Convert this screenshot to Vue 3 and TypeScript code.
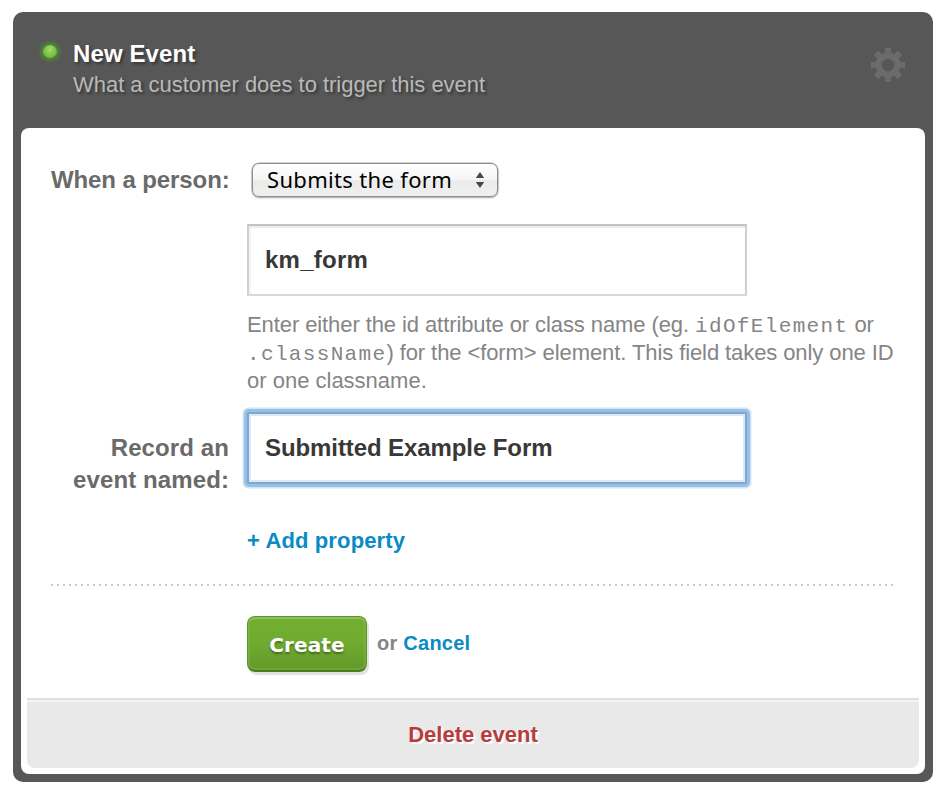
<script setup lang="ts">
import { ref } from 'vue'

const formId = ref<string>('km_form')
const eventName = ref<string>('Submitted Example Form')
const trigger = ref<string>('Submits the form')
const teeth: number[] = [0, 45, 90, 135, 180, 225, 270, 315]
</script>

<template>
  <main class="card">
    <header class="head">
      <i class="status"></i>
      <div class="titles">
        <h1>New Event</h1>
        <p><span class="subtitle">What a customer does to trigger this event</span></p>
      </div>
      <svg class="gear" width="34" height="34" viewBox="-17 -17 34 34">
        <g fill="#6b6b6b">
          <path v-for="a in teeth" :key="a" d="M-4.8 -10L-3.1 -13V-17H3.1V-13L4.8 -10Z" :transform="`rotate(${a})`" />
        </g>
        <circle r="9.3" fill="none" stroke="#6b6b6b" stroke-width="6" />
      </svg>
    </header>
    <section class="panel">
      <form class="form" @submit.prevent>
        <div class="row trigger-row">
          <label class="label first">When a person:</label>
          <button type="button" class="select">
            <span>{{ trigger }}</span>
            <svg width="10" height="16" viewBox="0 0 10 16"><path d="M5 0L9.2 6H.8ZM5 16L.8 10H9.2Z" fill="#474747" /></svg>
          </button>
        </div>
        <div class="row">
          <div class="offset">
            <input v-model="formId" class="field plain" type="text" spellcheck="false" />
            <p class="help">
              <span class="l1">Enter either the id attribute or class name (eg. <code>idOfElement</code> or</span><br />
              <span class="l2"><code>.className</code>) for the &lt;form&gt; element. This field takes only one ID</span><br />
              <span class="l3">or one classname.</span>
            </p>
          </div>
        </div>
        <div class="row name-row">
          <label class="label second">Record an<br />event named:</label>
          <input v-model="eventName" class="field focused" type="text" spellcheck="false" />
        </div>
        <div class="row"><a class="add">+ Add property</a></div>
        <svg class="divider" width="843" height="2"><path d="M0 1H843" stroke="#cacaca" stroke-width="2" stroke-dasharray="2 4" /></svg>
        <div class="actions">
          <button class="create" type="submit">Create</button>
          <span class="or">or <a>Cancel</a></span>
        </div>
      </form>
      <footer class="foot"><a>Delete event</a></footer>
    </section>
  </main>
</template>

<style>
body { background: #fff; }
</style>

<style scoped>
.card {
  box-sizing: border-box;
  width: 920px;
  height: 770px;
  margin: 12px 0 0 13px;
  padding: 0 8px 8px;
  border-radius: 10px;
  background: #575757;
  display: flex;
  flex-direction: column;
  font-family: "Liberation Sans", Arial, sans-serif;
}
.head {
  height: 116px;
  flex: none;
  display: flex;
  align-items: flex-start;
  box-sizing: border-box;
  padding: 0 20px;
}
.status {
  width: 14px;
  height: 13px;
  margin: 33px 16px 0 2px;
  border-radius: 50%;
  background: radial-gradient(ellipse at 50% 35%, #a5dc68 0, #83c64b 45%, #66a938 100%);
  box-shadow: 0 0 5px 2px #4b9b25;
}
.titles {
  flex: 1;
  padding-top: 27px;
  text-shadow: 2px 2px 3px rgba(0, 0, 0, .4);
}
h1, p { margin: 0; }
h1 {
  font-size: 24px;
  line-height: 30px;
  letter-spacing: .1px;
  color: #fff;
}
.titles p {
  font-size: 22px;
  line-height: 32px;
  color: #b9b9b9;
}
.subtitle { letter-spacing: -.03px; }
.gear { margin-top: 36px; }
.panel {
  height: 646px;
  display: flex;
  flex-direction: column;
  box-sizing: border-box;
  padding: 0 6px 6px;
  background: #fff;
  border-radius: 8px;
}
.form {
  flex: 1;
  padding: 35px 24px 0;
}
.row { display: flex; align-items: flex-start; }
.label {
  width: 178px;
  flex: none;
  margin-right: 18px;
  text-align: right;
  font-size: 24px;
  line-height: 32px;
  font-weight: bold;
  letter-spacing: .1px;
  white-space: nowrap;
  color: #6a6a6a;
}
.first { margin-top: 1px; letter-spacing: -.1px; }
.trigger-row { height: 61px; }
.select {
  box-sizing: border-box;
  width: 246px;
  height: 34px;
  margin-left: 5px;
  padding: 0 12px 0 14px;
  display: flex;
  align-items: center;
  justify-content: space-between;
  border: 1px solid #8f8f8f;
  border-radius: 7px;
  background: linear-gradient(#fff, #f5f5f5 50%, #ebebeb 51%, #efefef);
  box-shadow: 0 0 0 .5px #a8a8a8, 0 1px 2px rgba(0, 0, 0, .3);
  font: 22px/30px "Noto Sans", sans-serif;
  letter-spacing: .33px;
  color: #000;
}
.select span { margin-top: -2px; }
.offset { margin-left: 196px; }
.field {
  box-sizing: border-box;
  display: block;
  width: 500px;
  height: 72px;
  margin: 0;
  padding: 0 16px 1px;
  border: 2px solid;
  border-color: #c3c3c3 #cfcfcf #d8d8d8;
  background: #fff;
  box-shadow: inset 0 2px 1px #ececec, inset 2px 0 1px #f4f4f4;
  font: bold 24px "Liberation Sans", Arial, sans-serif;
  color: #383838;
  outline: none;
}
.plain { letter-spacing: .25px; }
.help {
  margin-top: 15px;
  height: 84px;
  font-size: 22px;
  line-height: 28px;
  color: #858585;
  white-space: nowrap;
}
.l1, .l2 { letter-spacing: -.09px; }
.help code {
  font: 21px/20px "Liberation Mono", monospace;
  letter-spacing: 1.34px;
}
.name-row { margin-top: 17px; height: 114px; }
.second { margin-top: 20px; }
.field.focused {
  border-color: #7fa8d1;
  box-shadow: 0 0 0 3px #97c0e6, 0 0 0 4.5px #d3e4f6, inset 0 0 0 2px #dce8f6;
  border-radius: 2px;
  letter-spacing: -.09px;
}
.add {
  margin-left: 196px;
  font-size: 22px;
  line-height: 30px;
  font-weight: bold;
  letter-spacing: .13px;
  color: #0b8bc5;
}
.divider { display: block; margin-top: 28px; }
.actions {
  display: flex;
  padding: 30px 0 0 196px;
}
.create {
  box-sizing: border-box;
  width: 120px;
  height: 56px;
  padding: 2px 0 0;
  border: 1px solid #5d9427;
  border-bottom: 2px solid #4d7d21;
  border-radius: 8px;
  background: linear-gradient(#72ae30, #70ac2f 45%, #63992a);
  box-shadow: inset 0 2px 1px #8fc057, inset 0 0 0 2px rgba(132, 186, 72, .4), 2px 3px 0 #e2e2e2;
  color: #fff;
  font: bold 20px "DejaVu Sans", sans-serif;
  letter-spacing: .1px;
  text-shadow: 0 2px 2px rgba(0, 0, 0, .35);
}
.or {
  margin: 12px 0 0 10px;
  font-size: 20px;
  line-height: 30px;
  font-weight: bold;
  letter-spacing: .25px;
  color: #858585;
}
.or a { color: #0b8bc5; }
.foot {
  box-sizing: border-box;
  height: 70px;
  border-top: 2px solid #dfdfdf;
  border-radius: 0 0 8px 8px;
  background: linear-gradient(#f4f4f4 2px, #e9e9e9 2px);
  display: flex;
  justify-content: center;
  padding-top: 20px;
  font-size: 22px;
  line-height: 30px;
  font-weight: bold;
  color: #b93c3c;
  text-shadow: 2px 2px 1px #fff;
}
</style>
